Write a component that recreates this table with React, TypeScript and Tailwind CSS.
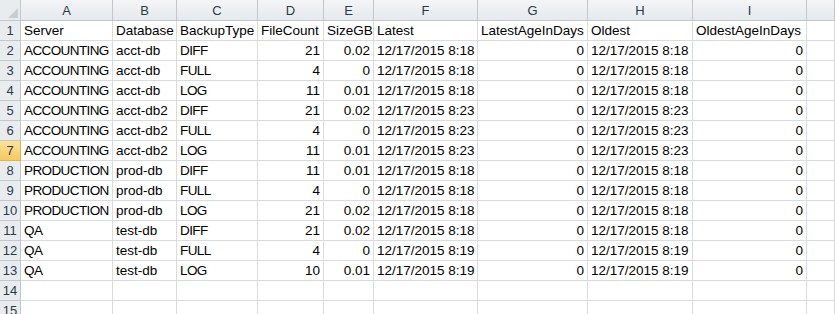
import React from "react";

/* ── sheet data ─────────────────────────────────────────────────── */

const COLUMNS = ["A", "B", "C", "D", "E", "F", "G", "H", "I", ""];

const HEADER = [
  "Server",
  "Database",
  "BackupType",
  "FileCount",
  "SizeGB",
  "Latest",
  "LatestAgeInDays",
  "Oldest",
  "OldestAgeInDays",
];

type Row = [string, string, string, number, number, string, number, string, number];

const ROWS: Row[] = [
  ["ACCOUNTING", "acct-db", "DIFF", 21, 0.02, "12/17/2015 8:18", 0, "12/17/2015 8:18", 0],
  ["ACCOUNTING", "acct-db", "FULL", 4, 0, "12/17/2015 8:18", 0, "12/17/2015 8:18", 0],
  ["ACCOUNTING", "acct-db", "LOG", 11, 0.01, "12/17/2015 8:18", 0, "12/17/2015 8:18", 0],
  ["ACCOUNTING", "acct-db2", "DIFF", 21, 0.02, "12/17/2015 8:23", 0, "12/17/2015 8:23", 0],
  ["ACCOUNTING", "acct-db2", "FULL", 4, 0, "12/17/2015 8:23", 0, "12/17/2015 8:23", 0],
  ["ACCOUNTING", "acct-db2", "LOG", 11, 0.01, "12/17/2015 8:23", 0, "12/17/2015 8:23", 0],
  ["PRODUCTION", "prod-db", "DIFF", 11, 0.01, "12/17/2015 8:18", 0, "12/17/2015 8:18", 0],
  ["PRODUCTION", "prod-db", "FULL", 4, 0, "12/17/2015 8:18", 0, "12/17/2015 8:18", 0],
  ["PRODUCTION", "prod-db", "LOG", 21, 0.02, "12/17/2015 8:18", 0, "12/17/2015 8:18", 0],
  ["QA", "test-db", "DIFF", 21, 0.02, "12/17/2015 8:18", 0, "12/17/2015 8:18", 0],
  ["QA", "test-db", "FULL", 4, 0, "12/17/2015 8:19", 0, "12/17/2015 8:19", 0],
  ["QA", "test-db", "LOG", 10, 0.01, "12/17/2015 8:19", 0, "12/17/2015 8:19", 0],
];

const ACTIVE_ROW = 7;
const EMPTY_ROWS = [14, 15];

const GRID =
  "grid grid-cols-[21px_92px_64px_81px_66px_50px_104px_110px_105px_114px_1fr]";
const CELL =
  "h-[20px] border-r border-b border-[#d9dbde] px-[3px] flex items-end pb-[1px] whitespace-nowrap overflow-hidden text-black";
const ROW_HEAD =
  "h-[20px] border-r border-b border-[#c3c7cc] flex items-end justify-center pb-[1px] text-[13px] text-[#2b3a4a]";

function Corner() {
  return (
    <div className="relative h-[21px] border-r border-b border-[#c3c7cc] bg-[#e9ecef]">
      <svg width="10" height="10" viewBox="0 0 10 10" className="absolute bottom-[2px] right-[2px]">
        <polygon points="10,0 10,10 0,10" fill="#c9ccd0" />
      </svg>
    </div>
  );
}

function Cell({ value }: { value: string | number | undefined }) {
  const numeric = typeof value === "number";
  // Calibri caps run narrow; tighten all-caps labels so they fit like the sheet
  const caps = typeof value === "string" && /^[A-Z]+$/.test(value);
  return (
    <div
      className={`${CELL} ${numeric ? "justify-end" : "justify-start"} ${caps ? "tracking-[-0.6px]" : ""}`}
    >
      {value ?? ""}
    </div>
  );
}

export default function App() {
  return (
    <div className="h-[314px] w-[835px] overflow-hidden bg-white font-['Liberation_Sans',Arial,sans-serif] text-[13.5px] leading-[16px]">
      {/* column letters */}
      <div className={GRID}>
        <Corner />
        {COLUMNS.map((c, i) => (
          <div
            key={i}
            className="flex h-[21px] items-center justify-center border-r border-b border-[#c3c7cc] bg-[linear-gradient(#f3f5f7,#e6e9ed)] pt-[1px] text-[13px] text-[#2b3a4a]"
          >
            {c}
          </div>
        ))}
      </div>

      {/* header row */}
      <div className={GRID}>
        <div className={`${ROW_HEAD} bg-[#e9ecef]`}>1</div>
        {HEADER.map((h) => (
          <div key={h} className={`${CELL} justify-start`}>
            {h}
          </div>
        ))}
        <div className={CELL} />
      </div>

      {/* data rows */}
      {ROWS.map((row, i) => {
        const n = i + 2;
        const active = n === ACTIVE_ROW;
        return (
          <div key={n} className={GRID}>
            <div
              className={`${ROW_HEAD} ${active ? "bg-[linear-gradient(#fbe39a,#f5c95e)] border-[#e0b44c]" : "bg-[#e9ecef]"}`}
            >
              {n}
            </div>
            {row.map((v, j) => (
              <Cell key={j} value={v} />
            ))}
            <div className={CELL} />
          </div>
        );
      })}

      {EMPTY_ROWS.map((n) => (
        <div key={n} className={GRID}>
          <div className={`${ROW_HEAD} bg-[#e9ecef]`}>{n}</div>
          {COLUMNS.map((_, j) => (
            <div key={j} className={CELL} />
          ))}
        </div>
      ))}
    </div>
  );
}
